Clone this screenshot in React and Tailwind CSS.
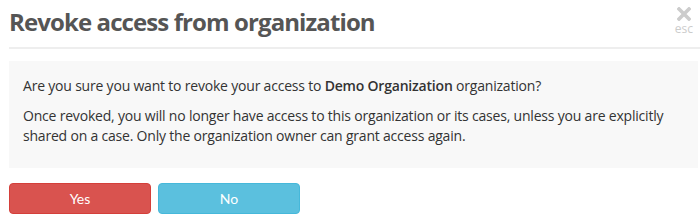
export default function App() {
  return (
    <div className="w-[700px] h-[220px] bg-white overflow-hidden" style={{ fontFamily: '"Open Sans", sans-serif' }}>
      <div className="flex items-start justify-between pl-[9px] pr-[7px] h-[47px]">
        <h1 className="text-[24px] font-bold text-[#555] leading-[33px] mt-[5px] tracking-[-0.9px]">Revoke access from organization</h1>
        <div className="flex flex-col items-center mt-[7px] text-[#ccc]">
          <svg width="14" height="14" viewBox="0 0 14 14">
            <path d="M2 2 L12 12 M12 2 L2 12" stroke="#cccccc" strokeWidth="3.6" strokeLinecap="square" />
          </svg>
          <span className="text-[12px] leading-[14px] mt-[1px]">esc</span>
        </div>
      </div>
      <div className="ml-[9px] h-[2px] bg-[#eeeeee]" />
      <div className="ml-[9px] mr-[2px] mt-[12px] bg-[#f8f8f8] pt-[15px] pb-[12px] px-[14px] text-[14px] leading-[20px] text-[#333] tracking-[-0.2px]">
        <p className="mb-[10px]">Are you sure you want to revoke your access to <b className="font-semibold">Demo Organization</b> organization?</p>
        <p className="mb-[10px]">Once revoked, you will no longer have access to this organization or its cases, unless you are explicitly shared on a case. Only the organization owner can grant access again.</p>
      </div>
      <div className="flex gap-[7px] ml-[9px] mt-[15px]" style={{ fontFamily: 'Lato, sans-serif' }}>
        <button className="w-[142px] h-[31px] rounded-[4px] bg-[#d9534f] border border-[#d43f3a] text-white text-[14px]">Yes</button>
        <button className="w-[142px] h-[31px] rounded-[4px] bg-[#5bc0de] border border-[#46b8da] text-white text-[14px]">No</button>
      </div>
    </div>
  );
}
